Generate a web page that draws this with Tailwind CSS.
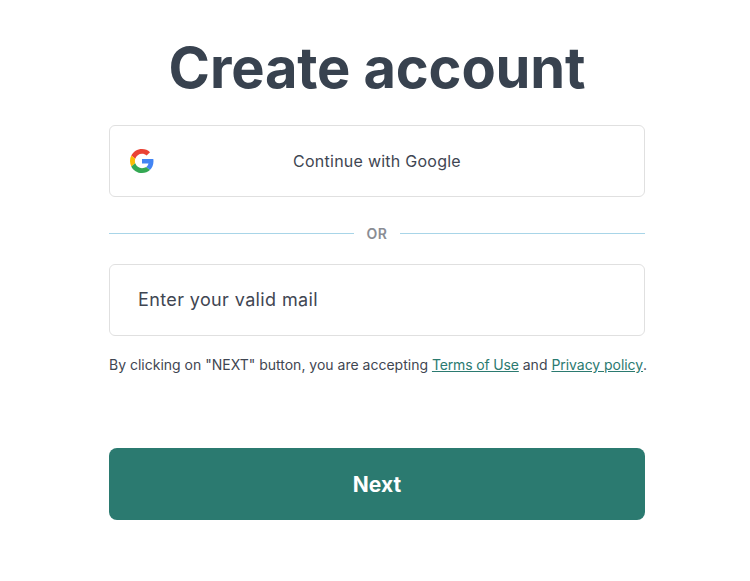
<!DOCTYPE html>
<html lang="en">
<head>
  <meta charset="UTF-8" />
  <meta name="viewport" content="width=device-width, initial-scale=1.0" />
  <title>Create account</title>
  <script src="https://cdn.jsdelivr.net/npm/@tailwindcss/browser@4"></script>
</head>
<body class="bg-white min-h-screen font-['Inter',sans-serif] text-[#3b4351]">
  <div class="w-[536px] ml-[109px] flex flex-col pt-[30px]">
    <h1 class="text-[56px] leading-[76px] font-bold text-center text-[#38424f] tracking-[-0.15px]">Create account</h1>

    <!-- Google -->
    <button class="mt-[19px] h-[72px] w-full flex items-center border border-[#e0e0e0] rounded-md px-5">
      <svg class="w-6 h-6" viewBox="0 0 48 48">
        <path fill="#EA4335" d="M24 9.5c3.54 0 6.71 1.22 9.21 3.6l6.85-6.85C35.9 2.38 30.47 0 24 0 14.62 0 6.51 5.38 2.56 13.22l7.98 6.19C12.43 13.72 17.74 9.5 24 9.5z"/>
        <path fill="#4285F4" d="M46.98 24.55c0-1.57-.15-3.09-.38-4.55H24v9.02h12.94c-.58 2.96-2.26 5.48-4.78 7.18l7.73 6c4.51-4.18 7.09-10.36 7.09-17.65z"/>
        <path fill="#FBBC05" d="M10.53 28.59c-.48-1.45-.76-2.99-.76-4.59s.27-3.14.76-4.59l-7.98-6.19C.92 16.46 0 20.12 0 24c0 3.88.92 7.54 2.56 10.78l7.97-6.19z"/>
        <path fill="#34A853" d="M24 48c6.48 0 11.93-2.13 15.89-5.81l-7.73-6c-2.15 1.45-4.92 2.3-8.16 2.3-6.26 0-11.57-4.22-13.47-9.91l-7.98 6.19C6.51 42.62 14.62 48 24 48z"/>
      </svg>
      <span class="flex-1 text-center text-base tracking-[0.25px] text-[#3f4652] pr-6">Continue with Google</span>
    </button>

    <!-- divider -->
    <div class="mt-[26px] flex items-center gap-3 h-[20px]">
      <div class="flex-1 h-px bg-[#a8d5e8]"></div>
      <span class="text-sm font-semibold tracking-[0.6px] text-[#8a8d94] pt-px">OR</span>
      <div class="flex-1 h-px bg-[#a8d5e8]"></div>
    </div>

    <input type="text" placeholder="Enter your valid mail" class="mt-[21px] h-[72px] w-full border border-[#e0e0e0] rounded-md px-7 pb-[2px] text-lg tracking-[0.38px] text-[#3f4652] placeholder:text-[#3f4652]" />

    <p class="mt-[19px] text-sm leading-5 text-[#3f4652] whitespace-nowrap">By clicking on "NEXT" button, you are accepting <a href="#" class="underline text-[#2b7a70] tracking-[-0.15px]">Terms of Use</a> and <a href="#" class="underline text-[#2b7a70] tracking-[-0.05px]">Privacy policy</a>.</p>

    <button class="mt-[73px] h-[72px] w-full bg-[#2b7a70] rounded-lg text-white text-[21px] font-bold pt-[2px]">Next</button>
  </div>
</body>
</html>
